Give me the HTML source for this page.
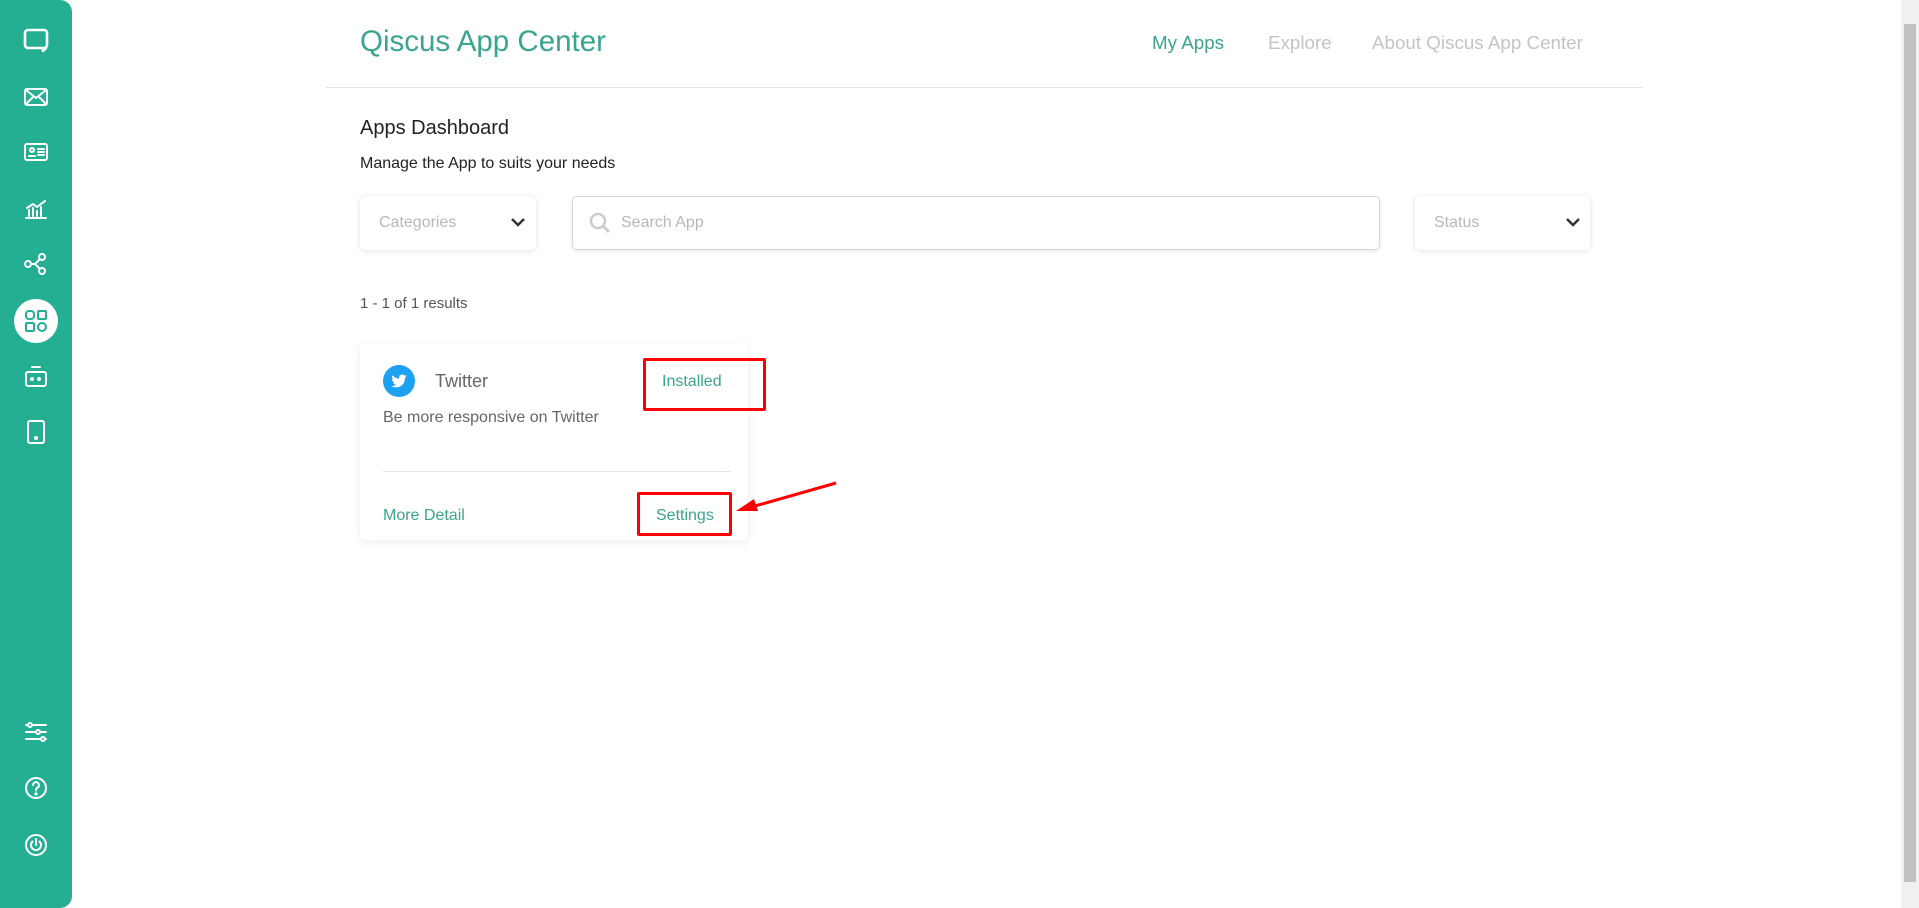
<!DOCTYPE html>
<html><head><meta charset="utf-8"><style>
*{box-sizing:border-box;margin:0;padding:0}
body{width:1919px;height:908px;background:#fff;font-family:"Liberation Sans",sans-serif;position:relative;overflow:hidden}
.abs{position:absolute}
.sb{left:0;top:0;width:72px;height:908px;background:#24af93;border-radius:0 12px 12px 0}
.ic{position:absolute;left:22px;width:28px;height:28px}
.ic svg{width:28px;height:28px;fill:none;stroke:#fff;stroke-width:2;stroke-linecap:round;stroke-linejoin:round}
.box{border-radius:5px;box-shadow:0 1px 6px rgba(0,0,0,.12);background:#fff}
.ph{color:#b8b8b8;font-size:16px}
</style></head><body>
<div class="abs sb"></div>
<div class="ic" style="top:26px"><svg viewBox="0 0 28 28"><path d="M6 4h16a3 3 0 0 1 3 3v12a3 3 0 0 1-3 3h2l-3 3v-3H6a3 3 0 0 1-3-3V7a3 3 0 0 1 3-3z" stroke-width="2.6"/></svg></div>
<div class="ic" style="top:83px"><svg viewBox="0 0 28 28"><rect x="3" y="6" width="22" height="16" rx="2"/><path d="M4 7l10 8 10-8M4 21l7-7M24 21l-7-7"/></svg></div>
<div class="ic" style="top:138px"><svg viewBox="0 0 28 28"><rect x="3" y="6" width="22" height="16" rx="2"/><circle cx="10" cy="12" r="2"/><path d="M7 18h6M16 11h6M16 14h6M16 17h6"/></svg></div>
<div class="ic" style="top:194px"><svg viewBox="0 0 28 28"><path d="M4 24h20M7 22v-6M11 22v-8M15 22v-5M19 22v-9M5 14l6-4 4 3 8-6"/></svg></div>
<div class="ic" style="top:250px"><svg viewBox="0 0 28 28"><circle cx="6" cy="14" r="3"/><circle cx="20" cy="7" r="3"/><circle cx="20" cy="21" r="3"/><path d="M9 14h4l5-5M13 14l5 5"/></svg></div>
<div class="abs" style="left:14px;top:299px;width:44px;height:44px;border-radius:50%;background:#fff"></div>
<div class="ic" style="top:307px"><svg viewBox="0 0 28 28" style="stroke:#24af93"><rect x="4" y="4" width="8" height="8" rx="3"/><rect x="16" y="4" width="8" height="8" rx="1"/><rect x="4" y="16" width="8" height="8" rx="1"/><rect x="16" y="16" width="8" height="8" rx="4"/></svg></div>
<div class="ic" style="top:363px"><svg viewBox="0 0 28 28"><path d="M10 4h8"/><rect x="4" y="9" width="20" height="14" rx="2"/><circle cx="10" cy="16" r="1" fill="#fff"/><circle cx="17" cy="16" r="1" fill="#fff"/></svg></div>
<div class="ic" style="top:418px"><svg viewBox="0 0 28 28"><rect x="6" y="3" width="16" height="22" rx="2"/><circle cx="14" cy="20" r="1" fill="#fff"/></svg></div>
<div class="ic" style="top:718px"><svg viewBox="0 0 28 28"><path d="M4 7h20M4 14h20M4 21h20"/><circle cx="8" cy="7" r="2" fill="#24af93"/><circle cx="16" cy="14" r="2" fill="#24af93"/><circle cx="21" cy="21" r="2" fill="#24af93"/></svg></div>
<div class="ic" style="top:774px"><svg viewBox="0 0 28 28"><circle cx="14" cy="14" r="10"/><path d="M11 11a3 3 0 1 1 4 3c-1 .5-1 1.5-1 2.5"/><circle cx="14" cy="20" r=".6" fill="#fff"/></svg></div>
<div class="ic" style="top:831px"><svg viewBox="0 0 28 28"><circle cx="14" cy="14" r="10"/><path d="M10.5 10.5a5 5 0 1 0 7 0M14 8v6"/></svg></div>

<div class="abs" style="left:360px;top:25px;font-size:29.5px;color:#3aa58e">Qiscus App Center</div>
<div class="abs" style="left:1152px;top:32px;font-size:18.8px;color:#3aa58e">My Apps</div>
<div class="abs" style="left:1268px;top:32px;font-size:18.8px;color:#c4c4c4">Explore</div>
<div class="abs" style="left:1372px;top:32px;font-size:18.8px;color:#c4c4c4">About Qiscus App Center</div>
<div class="abs" style="left:326px;top:87px;width:1317px;height:1px;background:#e2e2e2"></div>
<div class="abs" style="left:360px;top:117px;font-size:20px;color:#222">Apps Dashboard</div>
<div class="abs" style="left:360px;top:155px;font-size:16px;color:#222">Manage the App to suits your needs</div>

<div class="abs box" style="left:360px;top:196px;width:176px;height:54px"><span class="abs ph" style="left:19px;top:18px">Categories</span><svg class="abs" style="left:150px;top:20px" width="16" height="12" viewBox="0 0 16 12"><path d="M2 3l6 6 6-6" stroke="#333" stroke-width="2.5" fill="none"/></svg></div>
<div class="abs" style="left:572px;top:196px;width:808px;height:54px;border:1px solid #d6d6d6;border-radius:5px;box-shadow:0 1px 4px rgba(0,0,0,.1)"><svg class="abs" style="left:15px;top:14px" width="24" height="24" viewBox="0 0 24 24"><circle cx="10" cy="10" r="7" stroke="#ccc" stroke-width="2.5" fill="none"/><path d="M15 15l6 6" stroke="#ccc" stroke-width="3"/></svg><span class="abs ph" style="left:48px;top:17px">Search App</span></div>
<div class="abs box" style="left:1415px;top:196px;width:175px;height:54px"><span class="abs ph" style="left:19px;top:18px">Status</span><svg class="abs" style="left:150px;top:20px" width="16" height="12" viewBox="0 0 16 12"><path d="M2 3l6 6 6-6" stroke="#333" stroke-width="2.5" fill="none"/></svg></div>

<div class="abs" style="left:360px;top:295px;font-size:15px;color:#555">1 - 1 of 1 results</div>

<div class="abs box" style="left:360px;top:343px;width:388px;height:197px;box-shadow:0 2px 10px rgba(0,0,0,.08)"></div>
<svg class="abs" style="left:383px;top:365px" width="32" height="32" viewBox="0 0 32 32"><circle cx="16" cy="16" r="16" fill="#1da1f2"/><path d="M24 11c-.6.3-1.2.4-1.8.5.7-.4 1.1-1 1.4-1.7-.6.4-1.3.6-2 .8a3.2 3.2 0 0 0-5.5 2.9c-2.7-.1-5-1.4-6.6-3.3-.9 1.5-.4 3.4 1 4.3-.5 0-1-.2-1.5-.4 0 1.6 1.1 2.9 2.6 3.2-.5.1-1 .2-1.5.1.4 1.3 1.6 2.2 3 2.2A6.5 6.5 0 0 1 8 21c1.4.9 3.1 1.4 4.9 1.4 6 0 9.3-5 9.1-9.5.7-.5 1.2-1.1 1.6-1.8z" fill="#fff"/></svg>
<div class="abs" style="left:435px;top:371px;font-size:18px;color:#666">Twitter</div>
<div class="abs" style="left:662px;top:373px;font-size:16px;color:#3aa58e">Installed</div>
<div class="abs" style="left:643px;top:358px;width:123px;height:53px;border:3px solid #f00;border-radius:2px"></div>
<div class="abs" style="left:383px;top:409px;font-size:16px;color:#666">Be more responsive on Twitter</div>
<div class="abs" style="left:383px;top:471px;width:348px;height:1px;background:#e0e0e8"></div>
<div class="abs" style="left:383px;top:507px;font-size:16px;color:#3aa58e">More Detail</div>
<div class="abs" style="left:656px;top:507px;font-size:16px;color:#3aa58e">Settings</div>
<div class="abs" style="left:637px;top:492px;width:95px;height:44px;border:3px solid #f00;border-radius:2px"></div>
<svg class="abs" style="left:730px;top:478px" width="110" height="40" viewBox="0 0 110 40"><path d="M106 5L18 30" stroke="#f00" stroke-width="3"/><path d="M6 33l18-12 4 12z" fill="#f00"/></svg>

<div class="abs" style="left:1901px;top:0;width:18px;height:908px;background:#f1f1f1"></div>
<div class="abs" style="left:1904px;top:24px;width:12px;height:858px;background:#c1c1c1"></div>
</body></html>
